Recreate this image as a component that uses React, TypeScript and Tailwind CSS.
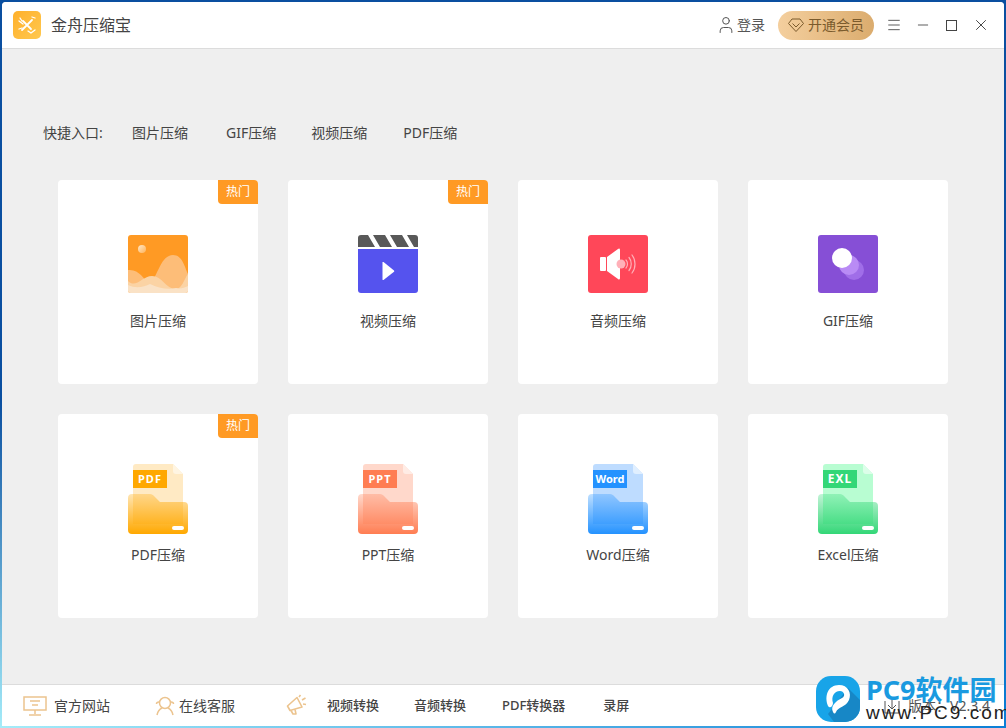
import React from 'react';
import { Menu, Minus, X, User } from 'lucide-react';

const fontCls = "font-['Noto_Sans','Noto_Sans_CJK_SC',sans-serif]";

const ImageIcon = () => (
  <svg width="60" height="58" viewBox="0 0 60 58" className="mt-[5px]">
    <defs>
      <clipPath id="imgClip"><rect width="60" height="58" rx="3" /></clipPath>
      <linearGradient id="sun" x1="0" y1="0" x2="1" y2="1">
        <stop offset="0" stopColor="#ffe8c8" />
        <stop offset="1" stopColor="#ffb35a" />
      </linearGradient>
    </defs>
    <g clipPath="url(#imgClip)">
      <rect width="60" height="58" fill="#ff9a24" />
      <circle cx="14" cy="14" r="4" fill="url(#sun)" />
      <path d="M22 50C30 40 33 20 45 20C56 20 57 36 62 42V58H22Z" fill="#fdbd78" />
      <path d="M0 35C12 34 14 44 22 48L28 58H0Z" fill="#fdbd78" />
      <path d="M0 46C8 54 14 41 24 41C34 41 38 54 48 54C54 54 56 44 60 39V58H0Z" fill="#fbd3a4" />
      <path d="M0 50C8 54 16 52 22 49C30 53 40 55 48 53C52 54 56 53 60 51V58H0Z" fill="#fae2c6" />
    </g>
  </svg>
);

const VideoIcon = () => (
  <svg width="60" height="58" viewBox="0 0 60 58" className="mt-[5px]">
    <path d="M3 0H57A3 3 0 0 1 60 3V12H0V3A3 3 0 0 1 3 0Z" fill="#595959" />
    <path d="M10 0H15L22 12H17ZM27 0H32L39 12H34ZM44 0H49L56 12H51Z" fill="#fff" />
    <path d="M0 14H60V55A3 3 0 0 1 57 58H3A3 3 0 0 1 0 55Z" fill="#5553ee" />
    <path d="M24.500 27.500C24.500 27 25 27 25.500 27L36 35.500C36.400 36 36.400 36.400 36 36.800L25.500 45C25 45.300 24.500 45 24.500 44.500Z" fill="#fff" />
  </svg>
);

const AudioIcon = () => (
  <svg width="60" height="58" viewBox="0 0 60 58" className="mt-[5px]">
    <rect width="60" height="58" rx="3" fill="#ff4759" />
    <rect x="12" y="22" width="6" height="14" rx="1" fill="#fff" />
    <path d="M19 22L30 14C31 13 32 13.500 32 15V43C32 44.500 31 45 30 44L19 36Z" fill="#fff" />
    <circle cx="33" cy="29" r="4.500" fill="#ffb0b8" />
    <path d="M38 25C40 27 40 31 38 33M41 22.500C44 26 44 32 41 35.500M44 20C48 25 48 33 44 38" fill="none" stroke="#ffb0b8" strokeWidth="1.200" strokeLinecap="round" />
  </svg>
);

const GifIcon = () => (
  <svg width="60" height="58" viewBox="0 0 60 58" className="mt-[5px]">
    <rect width="60" height="58" rx="3" fill="#864fd6" />
    <circle cx="36" cy="35" r="10" fill="#a06ee8" />
    <circle cx="31" cy="30" r="10" fill="#b98bf5" />
    <circle cx="24" cy="23" r="10" fill="#fff" />
  </svg>
);

const FolderIcon = ({ id, label, base, doc, fold, size = 11 }: { id: string; label: string; base: string; doc: string; fold: string; size?: number }) => (
  <svg width="60" height="70" viewBox="0 0 60 70">
    <defs>
      <linearGradient id={id} x1="0" y1="0" x2="0" y2="1">
        <stop offset="0" stopColor={base} stopOpacity="0.3" />
        <stop offset="1" stopColor={base} />
      </linearGradient>
    </defs>
    <path d="M8 0H45L55 10V60H5V3A3 3 0 0 1 8 0Z" fill={doc} />
    <path d="M45 0L55 10H48A3 3 0 0 1 45 7Z" fill={fold} />
    <rect x="5" y="6" width="34" height="18" fill={base} />
    <text x="22" y="19" textAnchor="middle" fill="#fff" fontSize={size} fontWeight="700" letterSpacing={label === 'Word' ? 0 : 1} fontFamily="'Noto Sans', sans-serif">{label}</text>
    <path d="M4 30H22C24 30 25 31 26 32L32 38H56A4 4 0 0 1 60 42V66A4 4 0 0 1 56 70H4A4 4 0 0 1 0 66V34A4 4 0 0 1 4 30Z" fill={`url(#${id})`} />
    <rect x="44" y="62" width="12" height="4" rx="2" fill="#fff" />
  </svg>
);

const tools = [
  { name: '图片压缩', hot: true, icon: <ImageIcon /> },
  { name: '视频压缩', hot: true, icon: <VideoIcon /> },
  { name: '音频压缩', hot: false, icon: <AudioIcon /> },
  { name: 'GIF压缩', hot: false, icon: <GifIcon /> },
  { name: 'PDF压缩', hot: true, icon: <FolderIcon id="fPdf" label="PDF" base="#ffa800" doc="#ffeac4" fold="#fff5e2" /> },
  { name: 'PPT压缩', hot: false, icon: <FolderIcon id="fPpt" label="PPT" base="#ff7d52" doc="#ffd8cb" fold="#ffece5" /> },
  { name: 'Word压缩', hot: false, icon: <FolderIcon id="fWord" label="Word" base="#2492ff" doc="#bedcff" fold="#e0efff" /> },
  { name: 'Excel压缩', hot: false, icon: <FolderIcon id="fExl" label="EXL" base="#33d777" doc="#b8fdd2" fold="#dcfee9" size={12} /> },
];

const ToolCard = ({ name, hot, icon }: { name: string; hot: boolean; icon: React.ReactNode }) => (
  <div className="relative flex h-[204px] w-[200px] flex-col items-center rounded-[4px] bg-white pt-[50px]">
    {hot && (
      <span className="absolute right-0 top-0 flex h-6 w-10 items-center justify-center rounded-bl-[4px] rounded-tr-[4px] bg-[#ff9a24] text-xs text-white">
        热门
      </span>
    )}
    <div className="flex h-[70px] items-start">{icon}</div>
    <span className="mt-[11px] text-sm leading-5 text-[#444]">{name}</span>
  </div>
);

const Watermark = () => (
  <div className="absolute bottom-[6px] left-[816px] flex items-center gap-[6px] whitespace-nowrap">
    <svg width="44" height="46" viewBox="0 0 44 46">
      <defs>
        <clipPath id="wmClip"><rect width="44" height="46" rx="15" /></clipPath>
      </defs>
      <g clipPath="url(#wmClip)">
        <rect width="44" height="46" fill="#18a4e8" />
        <path d="M32 12L44 24V46H18L12 38Z" fill="#1787c6" />
        <path d="M12 30C8 20 12 9 23 9C32 9 36 17 33 24C30 31 22 31 20 36C19 38 18 38 17 36C14 30 20 25 26 22C30 20 28 15 24 15C18 15 15 21 17 27C17 30 14 33 12 30Z" fill="#fff" />
      </g>
    </svg>
    <div className="flex flex-col">
      <span className="text-[27px] font-bold leading-[28px] text-[#1a9ae0]">PC9软件园</span>
      <span className="font-['Liberation_Sans',sans-serif] text-[19px] leading-[18px] tracking-[2px] text-[#222]">www.PC9.com</span>
    </div>
  </div>
);

export default function App() {
  return (
    <div className={`${fontCls} relative h-[728px] w-[1006px] overflow-hidden bg-[linear-gradient(to_bottom,#0a4fa0_0%,#0a4fa0_55%,transparent_100%),linear-gradient(to_right,#a5ecf9,#0b7fd6)] p-[2px]`}>
      <div className="flex h-full flex-col overflow-hidden rounded-t-[4px] bg-[#efefef]">
        {/* title bar */}
        <div className="flex h-[47px] shrink-0 items-center border-b border-[#dcdcdc] bg-white pl-[11px] pr-[14px]">
          <div className="flex h-7 w-7 items-center justify-center rounded-[5px] bg-gradient-to-br from-[#ffb02a] to-[#ffc84e]">
            <svg width="20" height="20" viewBox="0 0 20 20" fill="none" stroke="#fff" strokeWidth="1.800" strokeLinecap="round">
              <path d="M5 15L15 5M6 6L14 14" />
              <path d="M2 6L6 9M3 3L5 6M18 3L15 2M14 18L18 15M11 16L14 18M2 14L5 13" strokeWidth="1.300" />
            </svg>
          </div>
          <span className="ml-[10px] text-base text-[#444]">金舟压缩宝</span>
          <div className="ml-auto flex items-center">
            <User size={20} strokeWidth={1.200} className="text-[#555]" />
            <span className="ml-[1px] text-sm text-[#555]">登录</span>
            <div className="ml-[13px] flex h-[29px] w-24 items-center gap-1 rounded-full bg-gradient-to-r from-[#f4cf9e] to-[#dbac6e] pl-[10px]">
              <svg width="16" height="16" viewBox="0 0 16 16" fill="none" stroke="#7a5a2c" strokeWidth="1" strokeLinejoin="round">
                <path d="M4 2H12L15.500 6.500L8 14.500L0.500 6.500Z" />
                <path d="M4.500 6.500L8 10L11.500 6.500" />
              </svg>
              <span className="text-sm text-[#7a5a2c]">开通会员</span>
            </div>
            <Menu size={16} strokeWidth={1.300} className="ml-3 text-[#444]" />
            <Minus size={16} strokeWidth={1.300} className="ml-[13px] text-[#444]" />
            <span className="ml-[15px] h-[11px] w-[11px] border border-[#444]" />
            <X size={18} strokeWidth={1.300} className="ml-[15px] text-[#444]" />
          </div>
        </div>

        {/* quick entry */}
        <div className="mt-[74px] flex h-5 items-center pl-[41px] text-sm text-[#444]">
          <span className="w-[89px]">快捷入口:</span>
          <span>图片压缩</span>
          <span className="ml-[38px]">GIF压缩</span>
          <span className="ml-[35px]">视频压缩</span>
          <span className="ml-9">PDF压缩</span>
        </div>

        {/* tool cards */}
        <div className="ml-[56px] mt-[37px] grid grid-cols-[repeat(4,200px)] gap-[30px]">
          {tools.map((tool) => (
            <ToolCard key={tool.name} {...tool} />
          ))}
        </div>

        {/* footer */}
        <div className="mt-auto flex h-[42px] shrink-0 items-center border-t border-[#dcdcdc] bg-white pl-[21px] text-[#444]">
          <svg width="24" height="20" viewBox="0 0 24 20" fill="none" stroke="#ecc48f" strokeWidth="1.500">
            <rect x="1" y="1" width="22" height="13" />
            <path d="M7 5H17M9 9H15M12 14V18M6 19H18" />
          </svg>
          <span className="ml-[7px] text-sm">官方网站</span>
          <svg width="20" height="20" viewBox="0 0 20 20" fill="none" stroke="#ecc48f" strokeWidth="1.500" className="ml-[45px]">
            <circle cx="10" cy="7" r="5.500" />
            <path d="M2 19C3 14 6 12.500 7 12M18 19C17 14 14 12.500 13 12M1.500 8C1.500 6.500 2.500 6 4 6M18.500 8C18.500 6.500 17.500 6 16 6" />
          </svg>
          <span className="ml-1 text-sm">在线客服</span>
          <svg width="21" height="21" viewBox="0 0 21 21" fill="none" stroke="#ecc48f" strokeWidth="1.600" strokeLinejoin="round" className="mb-[3px] ml-[51px]">
            <path d="M1.500 12L11 3.500L16 13L4 16.500Z" />
            <path d="M5 16.500L7 20H10L9 15.500M13 3L14.500 1M16 6L19.500 4M17 10L20 10.500" />
          </svg>
          <div className="ml-5 flex items-center text-[13px] font-medium">
            <span>视频转换</span>
            <span className="ml-[35px]">音频转换</span>
            <span className="ml-9">PDF转换器</span>
            <span className="ml-[38px]">录屏</span>
          </div>
          <div className="ml-auto flex items-center gap-2 pr-[14px] text-sm text-[#555]">
            <svg width="16" height="16" viewBox="0 0 16 16" fill="none" stroke="#555" strokeWidth="1">
              <path d="M1 3V15H15V3M8 1V11M4 7L8 11L12 7" />
            </svg>
            <span>版本：V2.3.4</span>
          </div>
        </div>
      </div>
      <Watermark />
    </div>
  );
}
